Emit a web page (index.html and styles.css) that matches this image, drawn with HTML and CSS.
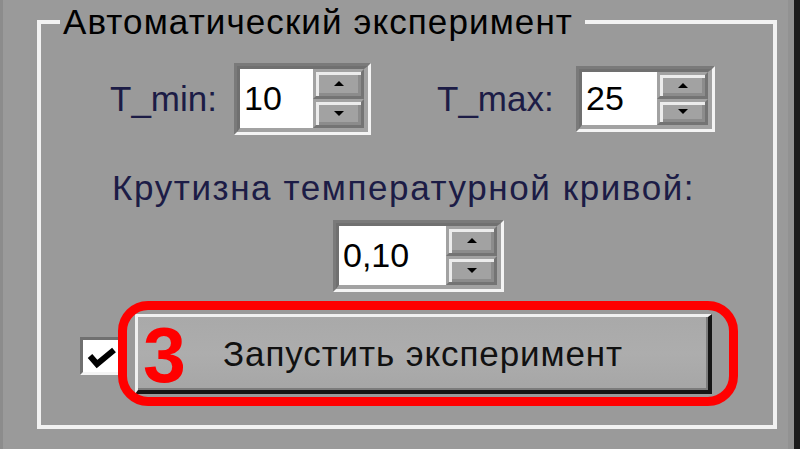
FILE: index.html
```html
<!DOCTYPE html>
<html lang="ru">
<head>
<meta charset="utf-8">
<title>Автоматический эксперимент</title>
<link rel="stylesheet" href="styles.css">
</head>
<body>
<div class="screen">
  <fieldset class="group">
    <legend class="group-title">Автоматический эксперимент</legend>

    <div class="limits">
      <span class="lbl lbl-min">T_min:</span>
      <div class="spin spin-min">
        <div class="spin-inner">
          <div class="field">10</div>
          <div class="spin-btns">
            <div class="sbtn"><span class="arrow-up"></span></div>
            <div class="sbtn"><span class="arrow-down"></span></div>
          </div>
        </div>
      </div>
      <span class="lbl lbl-max">T_max:</span>
      <div class="spin spin-max">
        <div class="spin-inner">
          <div class="field">25</div>
          <div class="spin-btns">
            <div class="sbtn"><span class="arrow-up"></span></div>
            <div class="sbtn"><span class="arrow-down"></span></div>
          </div>
        </div>
      </div>
    </div>

    <div class="slope">
      <div class="lbl lbl-slope">Крутизна температурной кривой:</div>
      <div class="spin spin-slope">
        <div class="spin-inner">
          <div class="field">0,10</div>
          <div class="spin-btns">
            <div class="sbtn"><span class="arrow-up"></span></div>
            <div class="sbtn"><span class="arrow-down"></span></div>
          </div>
        </div>
      </div>
    </div>

    <div class="run-row">
      <div class="check">
        <svg class="tick" width="30" height="22" viewBox="0 0 30 22">
          <polyline points="3,9 10,17 27,3" fill="none" stroke="#000" stroke-width="6" stroke-linejoin="miter"/>
        </svg>
      </div>
      <div class="run-wrap">
        <button class="run-btn">Запустить эксперимент</button>
        <div class="callout"></div>
        <span class="callout-num">3</span>
      </div>
    </div>
  </fieldset>
</div>
</body>
</html>
```

FILE: styles.css
```css
html, body {
  margin: 0;
  padding: 0;
  background: #9a9a9a;
}

.screen {
  width: 800px;
  height: 449px;
  overflow: hidden;
  background: #9a9a9a;
  box-shadow: inset 3px 0 0 #8c8c8c, inset -6px 0 0 #1c1c1c, inset -12px 0 0 #929292;
  font-family: "Liberation Sans", Arial, sans-serif;
  display: flex;
  align-items: flex-start;
}

.group {
  box-sizing: border-box;
  margin: 2px 0 0 37px;
  padding: 0;
  width: 740px;
  height: 427px;
  border: 4px solid #f2f2f2;
  min-width: 0;
}

.group-title {
  margin-left: 19px;
  padding: 0 12px 0 3px;
  font-size: 35px;
  line-height: 40px;
  letter-spacing: 1.1px;
  color: #000;
}

.lbl {
  font-size: 35px;
  line-height: 40px;
  color: #1c1c46;
  white-space: nowrap;
}

.limits {
  display: flex;
  align-items: center;
  margin-top: 21px;
  padding-left: 69px;
}

.lbl-min {
  width: 124px;
}

.lbl-max {
  width: 139px;
  margin-left: 66px;
}

/* sunken spin box */
.spin {
  display: flex;
  border: 3px solid;
  border-color: #7a7a7a #f4f4f4 #f4f4f4 #7a7a7a;
}

.spin-inner {
  display: flex;
  border-style: solid;
  border-width: 3px 4px 4px 3px;
  border-color: #707070 #a2a2a2 #a2a2a2 #707070;
}

.field {
  background: #fff;
  font-size: 34px;
  color: #000;
  display: flex;
  align-items: center;
  padding-left: 4px;
  box-sizing: border-box;
}

.spin-min .field { width: 73px; height: 59px; }
.spin-max .field { width: 75px; height: 53px; }
.spin-slope .field { width: 107px; height: 59px; }

.spin-btns {
  display: flex;
  flex-direction: column;
  width: 51px;
}

.sbtn {
  flex: 1;
  background: #a2a2a2;
  border-style: solid;
  border-width: 3px;
  border-color: #a2a2a2 #747474 #747474 #a2a2a2;
  box-shadow: inset 3px 3px 0 #ececec, inset -3px -3px 0 #8c8c8c;
  display: flex;
  align-items: center;
  justify-content: center;
}

.arrow-up,
.arrow-down {
  width: 0;
  height: 0;
  border-left: 5px solid transparent;
  border-right: 5px solid transparent;
}

.arrow-up { border-bottom: 5px solid #000; }
.arrow-down { border-top: 5px solid #000; }

.slope {
  display: flex;
  flex-direction: column;
  align-items: flex-start;
  margin-top: 33px;
}

.lbl-slope {
  margin-left: 71px;
  letter-spacing: 1.6px;
}

.spin-slope {
  margin-top: 12px;
  margin-left: 292px;
}

.run-row {
  display: flex;
  align-items: center;
  margin-top: 22px;
  padding-left: 39px;
}

.check {
  box-sizing: border-box;
  width: 40px;
  height: 38px;
  margin-top: 3px;
  background: #fff;
  border-style: solid;
  border-width: 3px 0 3px 3px;
  border-color: #707070 #f4f4f4 #f4f4f4 #707070;
  display: flex;
  align-items: flex-start;
  padding: 7px 0 0 4px;
}

.run-wrap {
  position: relative;
  margin-left: 15px;
}

.run-btn {
  display: block;
  box-sizing: border-box;
  width: 577px;
  height: 80px;
  margin: 0;
  padding: 0;
  background: linear-gradient(to bottom, #a9a9a9, #adadad 50%, #a6a6a6);
  border-style: solid;
  border-width: 3px 4px 4px 3px;
  border-color: #f0f0f0 #151515 #151515 #f0f0f0;
  box-shadow: inset -2px -2px 0 #7c7c7c;
  font-family: "Liberation Sans", Arial, sans-serif;
  font-size: 35px;
  letter-spacing: 0.9px;
  color: #111;
}

.callout {
  position: absolute;
  left: -17px;
  top: -13px;
  width: 620px;
  height: 105px;
  box-sizing: border-box;
  border: 9px solid #ff0000;
  border-radius: 30px;
}

.callout-num {
  position: absolute;
  left: 8px;
  top: 3px;
  font-family: "Liberation Sans", Arial, sans-serif;
  font-weight: bold;
  font-size: 77px;
  line-height: 1;
  color: #ff0000;
}
```
